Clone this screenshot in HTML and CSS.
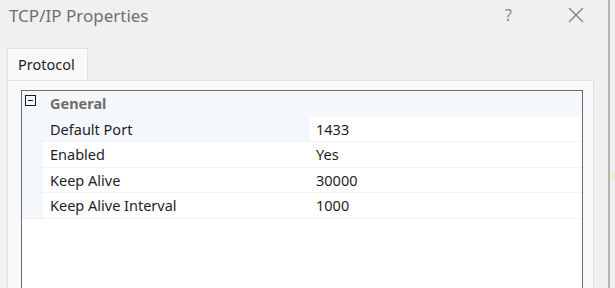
FILE: index.html
```html
<!DOCTYPE html>
<html>
<head>
<meta charset="utf-8">
<link rel="stylesheet" href="styles.css">
</head>
<body>
<div class="screen">
  <div class="dialog">
    <div class="titlebar">
      <span class="title">TCP/IP Properties</span>
      <span class="help">?</span>
      <svg class="close" width="16" height="16" viewBox="0 0 16 16"><path d="M1 1 L15 15 M15 1 L1 15" stroke="#7a7a7a" stroke-width="1.2" fill="none"/></svg>
    </div>
    <div class="tabs">
      <div class="tab">Protocol</div>
    </div>
    <div class="panel">
      <div class="grid">
        <div class="row header">
          <div class="gutter"><span class="minus"></span></div>
          <div class="cat">General</div>
        </div>
        <div class="row focus short">
          <div class="gutter"></div>
          <div class="name">Default Port</div>
          <div class="value">1433</div>
        </div>
        <div class="row">
          <div class="gutter"></div>
          <div class="name">Enabled</div>
          <div class="value">Yes</div>
        </div>
        <div class="row short">
          <div class="gutter"></div>
          <div class="name">Keep Alive</div>
          <div class="value">30000</div>
        </div>
        <div class="row">
          <div class="gutter"></div>
          <div class="name">Keep Alive Interval</div>
          <div class="value">1000</div>
        </div>
      </div>
    </div>
  </div>
  <div class="outside"></div>
</div>
</body>
</html>
```
FILE: styles.css
```css
html, body {
  margin: 0;
  padding: 0;
}
body {
  width: 615px;
  height: 288px;
  overflow: hidden;
  background: #f0f0f0;
  font-family: "Noto Sans", "Open Sans", sans-serif;
}
.screen {
  display: flex;
  height: 288px;
}
.dialog {
  width: 610px;
  background: #f0f0f0;
  display: flex;
  flex-direction: column;
  overflow: hidden;
}
.outside {
  width: 5px;
  border-left: 2px solid #b4b4b4;
  background: linear-gradient(#f0f0f0 0 60%, #e9ecd0 60% 62%, #f0f0f0 62%);
}
.titlebar {
  height: 30px;
  flex: none;
  display: flex;
  align-items: center;
}
.title {
  margin-left: 9px;
  font-size: 17px;
  color: #6f6f6f;
  flex: 1;
}
.help {
  font-size: 16px;
  color: #8a8a8a;
  margin-right: 56px;
}
.close {
  margin-right: 24px;
}
.tabs {
  flex: none;
  margin-top: 18px;
  padding-left: 7px;
  display: flex;
}
.tab {
  width: 81px;
  height: 32px;
  box-sizing: border-box;
  background: #f9f9f9;
  border: 1px solid #e2e2e2;
  border-bottom: none;
  font-size: 14.5px;
  color: #1e1e1e;
  padding-left: 10px;
  padding-top: 5px;
}
.panel {
  margin-left: 7px;
  width: 587px;
  flex: 1;
  min-height: 0;
  box-sizing: border-box;
  background: #f9f9f9;
  border: 1px solid #e2e2e2;
  border-bottom: none;
  padding: 9px 0 0 13px;
}
.grid {
  width: 562px;
  height: 220px;
  box-sizing: border-box;
  background: #ffffff;
  border: 1px solid #6a6a6a;
  border-bottom: none;
}
.row {
  display: flex;
  height: 26px;
  font-size: 14.5px;
  color: #1e1e1e;
  line-height: 25px;
  border-bottom: 1px solid #f3f3f3;
  box-sizing: border-box;
}
.row.short {
  height: 25px;
}
.row.header {
  background: #f4f7fb;
  height: 26px;
  border-bottom: none;
}
.gutter {
  width: 21px;
  flex: none;
  background: #f4f7fb;
  position: relative;
}
.minus {
  position: absolute;
  left: 3px;
  top: 4px;
  width: 11px;
  height: 11px;
  box-sizing: border-box;
  border: 1px solid #1a1a1a;
}
.minus::after {
  content: "";
  position: absolute;
  left: 2px;
  top: 4px;
  width: 5px;
  height: 1px;
  background: #1a1a1a;
}
.cat {
  padding-left: 7px;
  font-weight: bold;
  color: #6d6d6d;
}
.name {
  width: 267px;
  flex: none;
  padding-left: 7px;
  box-sizing: border-box;
}
.row.focus .name {
  background: #f4f7fb;
}
.value {
  padding-left: 6px;
}
```
